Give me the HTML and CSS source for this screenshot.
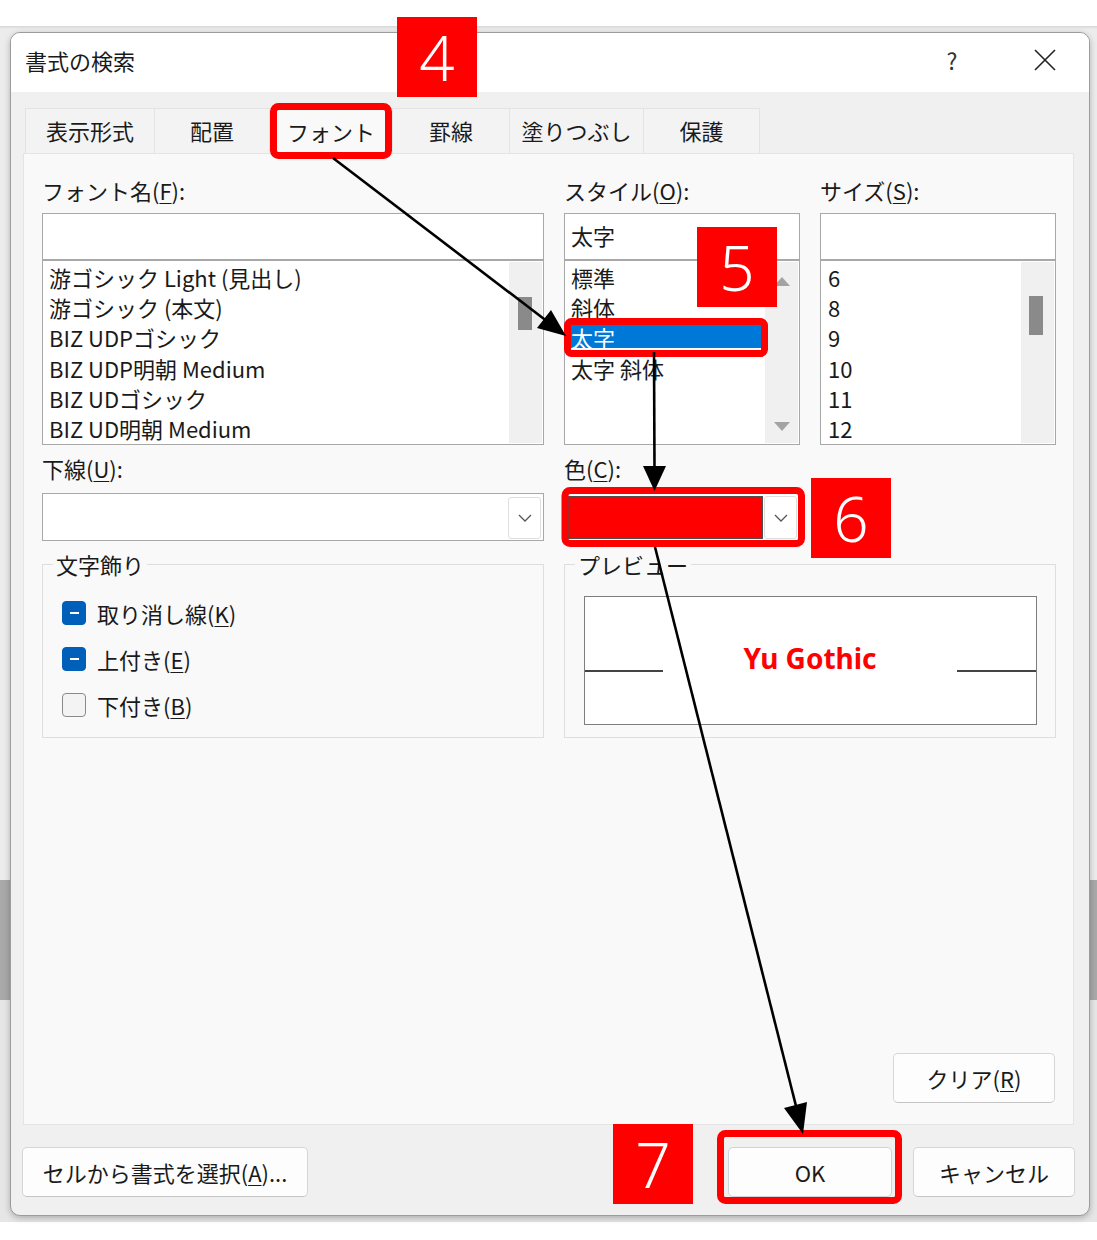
FILE: index.html
```html
<!DOCTYPE html>
<html lang="ja">
<head>
<meta charset="utf-8">
<title>書式の検索</title>
<link rel="stylesheet" href="styles.css">
</head>
<body>
<div class="page">
  <div class="backdrop">
    <div class="dialog">
      <div class="titlebar">
        <span class="title">書式の検索</span>
        <span class="help">?</span>
        <span class="close">
          <svg width="22" height="22" viewBox="0 0 22 22"><path d="M1 1 L21 21 M21 1 L1 21" stroke="#222" stroke-width="1.6" fill="none"/></svg>
        </span>
      </div>
      <div class="body">
        <div class="tabs">
          <div class="tab t1">表示形式</div>
          <div class="tab t2">配置</div>
          <div class="tab t3 active">フォント</div>
          <div class="tab t4">罫線</div>
          <div class="tab t5">塗りつぶし</div>
          <div class="tab t6">保護</div>
        </div>
        <div class="panel">
          <div class="grid">
            <div class="field c1 r1">
              <div class="lbl">フォント名(<u>F</u>):</div>
              <div class="input"></div>
              <div class="list">
                <div class="items">
                  <div class="item">游ゴシック Light (見出し)</div>
                  <div class="item">游ゴシック (本文)</div>
                  <div class="item">BIZ UDPゴシック</div>
                  <div class="item">BIZ UDP明朝 Medium</div>
                  <div class="item">BIZ UDゴシック</div>
                  <div class="item">BIZ UD明朝 Medium</div>
                </div>
                <div class="scroll"><div class="thumb"></div></div>
              </div>
            </div>
            <div class="field c2 r1">
              <div class="lbl">スタイル(<u>O</u>):</div>
              <div class="input">太字</div>
              <div class="list">
                <div class="items items-style">
                  <div class="item">標準</div>
                  <div class="item">斜体</div>
                  <div class="item sel">太字</div>
                  <div class="item">太字 斜体</div>
                </div>
                <div class="scroll scroll-arrows">
                  <span class="tri up"></span>
                  <span class="tri down"></span>
                </div>
              </div>
            </div>
            <div class="field c3 r1">
              <div class="lbl">サイズ(<u>S</u>):</div>
              <div class="input"></div>
              <div class="list">
                <div class="items items-size">
                  <div class="item">6</div>
                  <div class="item">8</div>
                  <div class="item">9</div>
                  <div class="item">10</div>
                  <div class="item">11</div>
                  <div class="item">12</div>
                </div>
                <div class="scroll"><div class="thumb thumb-size"></div></div>
              </div>
            </div>

            <div class="field c1 r2 row2">
              <div class="lbl lbl2">下線(<u>U</u>):</div>
              <div class="dropdown">
                <div class="chev"><svg width="14" height="8" viewBox="0 0 14 8"><path d="M1 1 L7 7 L13 1" stroke="#555" stroke-width="1.3" fill="none"/></svg></div>
              </div>
            </div>
            <div class="field c2 r2 row2">
              <div class="lbl lbl2">色(<u>C</u>):</div>
              <div class="dropdown color-dd">
                <div class="swatch"></div>
                <div class="chev"><svg width="14" height="8" viewBox="0 0 14 8"><path d="M1 1 L7 7 L13 1" stroke="#555" stroke-width="1.3" fill="none"/></svg></div>
              </div>
            </div>

            <fieldset class="group deco c1 r3">
              <legend>文字飾り</legend>
              <div class="check"><span class="cb on"></span><span>取り消し線(<u>K</u>)</span></div>
              <div class="check"><span class="cb on"></span><span>上付き(<u>E</u>)</span></div>
              <div class="check"><span class="cb"></span><span>下付き(<u>B</u>)</span></div>
            </fieldset>
            <fieldset class="group preview r3">
              <legend>プレビュー</legend>
              <div class="pv-box">
                <div class="pv-line pv-left"></div>
                <div class="pv-text">Yu Gothic</div>
                <div class="pv-line pv-right"></div>
              </div>
            </fieldset>
          </div>
          <div class="clear-row">
            <button class="btn btn-clear">クリア(<u>R</u>)</button>
          </div>
        </div>
        <div class="footer">
          <button class="btn btn-pick">セルから書式を選択(<u>A</u>)...</button>
          <div class="spacer"></div>
          <button class="btn btn-ok">OK</button>
          <button class="btn btn-cancel">キャンセル</button>
        </div>
      </div>
    </div>
  </div>

  <svg class="overlay" width="1097" height="1240" viewBox="0 0 1097 1240">
    <g fill="none" stroke="#ff0000" stroke-width="7">
      <rect x="273.5" y="106.5" width="115" height="49" rx="5"/>
      <rect x="567.5" y="321.5" width="197" height="32" rx="4"/>
      <rect x="565" y="490.5" width="236.5" height="53" rx="5"/>
      <rect x="720.5" y="1133.5" width="178" height="67" rx="5"/>
    </g>
    <g stroke="#000" stroke-width="2.6" fill="none">
      <line x1="333" y1="158" x2="548" y2="322"/>
      <line x1="654" y1="352" x2="654.5" y2="470"/>
      <line x1="655" y1="547" x2="797" y2="1110"/>
    </g>
    <g fill="#000">
      <polygon points="566,336 537,328 551,310"/>
      <polygon points="654.5,491 643,466 666,466"/>
      <polygon points="803,1134 784,1108 807,1102"/>
    </g>
  </svg>
  <div class="badge b4">4</div>
  <div class="badge b5">5</div>
  <div class="badge b6">6</div>
  <div class="badge b7">7</div>
</div>
</body>
</html>
```

FILE: styles.css
```css
* { box-sizing: border-box; }
html, body { margin: 0; padding: 0; background: #ffffff; }
body {
  font-family: "Noto Sans CJK JP", "Noto Sans", "DejaVu Sans", sans-serif;
  color: #1a1a1a;
}
u { text-decoration-thickness: 1px; text-underline-offset: 3px; }

.page {
  position: relative;
  width: 1097px;
  height: 1240px;
  padding-top: 26px;
  overflow: hidden;
}
.backdrop {
  height: 1196px;
  padding: 6px 7px 0 10px;
  background: linear-gradient(to bottom, #d6d6d6 0, #ececec 3px, #ececec 854px, #a9a9a9 854px, #a9a9a9 974px, #e6e6e6 974px);
}
.dialog {
  width: 1080px;
  height: 1184px;
  border: 1px solid #9c9c9c;
  border-radius: 10px;
  background: #f0f0f0;
  box-shadow: 0 2px 6px rgba(0,0,0,0.25);
  overflow: hidden;
  display: flex;
  flex-direction: column;
}

/* title bar */
.titlebar {
  flex: none;
  height: 59px;
  background: #ffffff;
  display: flex;
  align-items: center;
  padding-left: 14px;
  padding-bottom: 5px;
}
.title { font-size: 22px; line-height: 30px; color: #1a1a1a; }
.help {
  margin-left: auto;
  width: 40px;
  text-align: center;
  font-size: 23px;
  line-height: 30px;
  color: #333;
}
.close {
  width: 46px;
  height: 30px;
  margin-left: 50px;
  margin-right: 21px;
  display: flex;
  align-items: center;
  justify-content: center;
}

/* body */
.body {
  flex: 1;
  padding: 16px 15px 0 12px;
  display: flex;
  flex-direction: column;
}
.tabs {
  display: flex;
  height: 45px;
  margin-left: 2px;
  position: relative;
  z-index: 1;
}
.tab {
  height: 45px;
  background: #f3f3f3;
  border-top: 1px solid #e3e3e3;
  border-right: 1px solid #e3e3e3;
  font-size: 22px;
  display: flex;
  align-items: center;
  justify-content: center;
  color: #1a1a1a;
  padding-bottom: 2px;
}
.t1 { width: 130px; border-left: 1px solid #e3e3e3; }
.t2 { width: 115px; }
.t3 { width: 123px; }
.t4 { width: 117px; }
.t5 { width: 134px; }
.t6 { width: 116px; }
.tab.active {
  background: #f9f9f9;
  height: 46px;
}

.panel {
  height: 972px;
  background: #f9f9f9;
  border: 1px solid #e4e4e4;
  padding: 23px 17px 21px 18px;
  display: flex;
  flex-direction: column;
}
.grid {
  display: grid;
  grid-template-columns: 502px 236px 236px;
  column-gap: 20px;
  align-items: start;
}
.c1 { grid-column: 1; }
.c2 { grid-column: 2; }
.c3 { grid-column: 3; }
.r1 { grid-row: 1; }
.r2 { grid-row: 2; }
.r3 { grid-row: 3; }

.lbl {
  font-size: 22px;
  line-height: 30px;
  height: 30px;
  margin: -2px 0 8px;
  white-space: nowrap;
}
.input {
  height: 47px;
  background: #ffffff;
  border: 1px solid #a8a8a8;
  font-size: 22px;
  line-height: 42px;
  padding-left: 6px;
}
.list {
  height: 185px;
  background: #ffffff;
  border: 1px solid #a8a8a8;
  display: flex;
}
.items {
  flex: 1;
  padding: 1px 0 0 6px;
  font-size: 22px;
  line-height: 30.2px;
  white-space: nowrap;
  overflow: hidden;
}
.items-style { padding: 1px 4px 0 6px; }
.items-size { padding-left: 7px; }
.item.sel {
  background: linear-gradient(to bottom, transparent 1px, #0078d7 1px, #0078d7 26px, transparent 26px);
  color: #ffffff;
}
.scroll {
  width: 33px;
  margin: 1px 1px 1px 0;
  background: #f0f0f0;
}
.thumb {
  width: 14px;
  height: 33px;
  margin: 35px 0 0 9px;
  background: #8a8a8a;
}
.thumb-size { height: 39px; margin-top: 34px; margin-left: 8px; }
.scroll-arrows {
  display: flex;
  flex-direction: column;
  align-items: center;
  justify-content: space-between;
  padding: 15px 0 12px;
}
.tri {
  width: 0;
  height: 0;
  border-left: 8px solid transparent;
  border-right: 8px solid transparent;
}
.tri.up { border-bottom: 9px solid #a3a3a3; }
.tri.down { border-top: 9px solid #a3a3a3; }

/* row 2 */
.row2 { margin-top: 10px; }
.lbl2 { margin-bottom: 10px; }
.dropdown {
  height: 48px;
  background: #ffffff;
  border: 1px solid #a8a8a8;
  display: flex;
  justify-content: flex-end;
  padding: 3px 2px 1px 3px;
}
.chev {
  width: 33px;
  background: #ffffff;
  border: 1px solid #dedede;
  border-radius: 3px;
  display: flex;
  align-items: center;
  justify-content: center;
}
.color-dd { padding: 2px 2px 1px 3px; }
.swatch {
  flex: 1;
  background: #ff0000;
  border: 1px dotted #555;
  margin-right: 1px;
}

/* group boxes */
.group {
  margin: 8px 0 0;
  height: 189px;
  border: 1px solid #dedede;
  min-width: 0;
}
.group legend {
  font-size: 22px;
  line-height: 30px;
  padding: 0 3px;
  margin-left: -9px;
}
.deco { padding: 13px 0 0 19px; }
.check {
  display: flex;
  align-items: center;
  gap: 11px;
  height: 46px;
  font-size: 22px;
  margin-top: -2px;
  margin-bottom: 2px;
}
.cb {
  width: 24px;
  height: 24px;
  border-radius: 4px;
  border: 1.5px solid #8a8a8a;
  background: #f3f3f3;
  display: flex;
  align-items: center;
  justify-content: center;
  flex: none;
}
.cb.on {
  background: #005fb8;
  border-color: #005fb8;
}
.cb.on::after {
  content: "";
  width: 9px;
  height: 2px;
  background: #ffffff;
}
.preview {
  grid-column: 2 / span 2;
  padding: 17px 0 0 19px;
}
.pv-box {
  width: 453px;
  height: 129px;
  background: #ffffff;
  border: 1.5px solid #7e7e7e;
  display: flex;
  align-items: flex-start;
}
.pv-line {
  height: 1.5px;
  background: #444;
  margin-top: 73px;
  flex: none;
}
.pv-left { width: 78px; }
.pv-right { width: 79px; }
.pv-text {
  flex: 1;
  text-align: center;
  color: #ff0000;
  font-family: "Noto Sans", "Noto Sans CJK JP", sans-serif;
  font-weight: 700;
  font-size: 28px;
  line-height: 40px;
  margin-top: 41px;
}

.clear-row {
  margin-top: auto;
  display: flex;
  justify-content: flex-end;
  padding-right: 1px;
}

/* buttons */
.btn {
  font-family: "Noto Sans CJK JP", "Noto Sans", sans-serif;
  font-size: 22px;
  color: #1a1a1a;
  height: 50px;
  background: #fdfdfd;
  border: 1px solid #d6d6d6;
  border-bottom-color: #c4c4c4;
  border-radius: 5px;
  padding: 0;
  display: flex;
  align-items: center;
  justify-content: center;
}
.btn-clear { width: 162px; }
.footer {
  margin-top: 22px;
  display: flex;
  height: 50px;
}
.btn-pick { width: 286px; margin-left: -1px; }
.spacer { flex: 1; }
.btn-ok { width: 164px; border-color: #cdd3da; }
.btn-cancel { width: 162px; margin-left: 21px; margin-right: -1px; }

/* annotations */
.overlay {
  position: absolute;
  left: 0;
  top: 0;
  z-index: 5;
}
.badge {
  position: absolute;
  z-index: 6;
  width: 80px;
  height: 80px;
  background: #ff0000;
  color: #ffffff;
  font-family: "Noto Sans", "Open Sans", sans-serif;
  font-weight: 300;
  font-size: 62px;
  line-height: 1;
  display: flex;
  align-items: center;
  justify-content: center;
}
.b4 { left: 397px; top: 17px; }
.b5 { left: 697px; top: 227px; }
.b6 { left: 811px; top: 478px; }
.b7 { left: 613px; top: 1124px; }
```
